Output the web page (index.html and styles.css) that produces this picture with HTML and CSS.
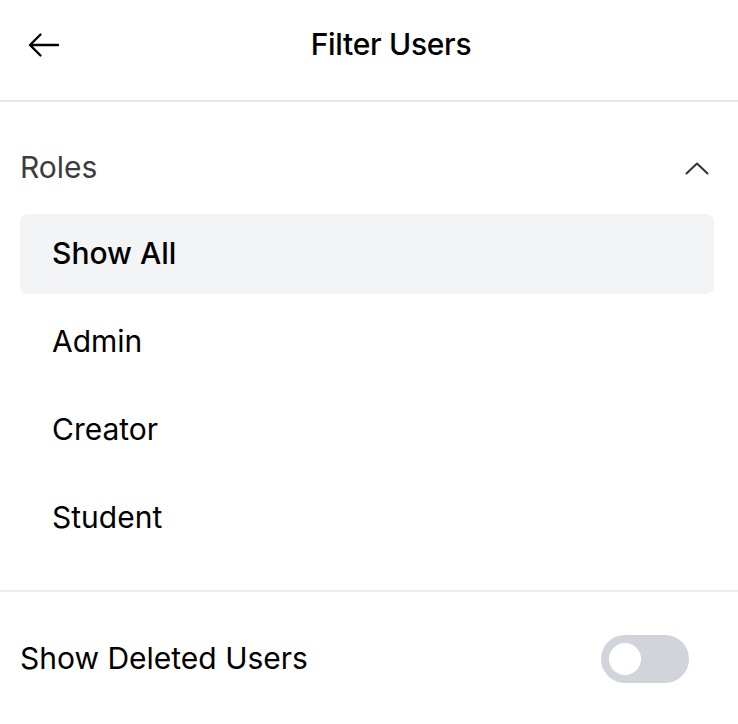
FILE: index.html
```html
<!DOCTYPE html>
<html>
<head>
<meta charset="utf-8">
<link rel="stylesheet" href="styles.css">
</head>
<body>
<div class="panel">
  <header class="header">
    <button class="back" aria-label="Back">
      <svg width="32" height="26" viewBox="0 0 32 26" fill="none" stroke="#000" stroke-width="2.4" stroke-linecap="round" stroke-linejoin="round">
        <path d="M30 13H2.5M12.5 2.5L2 13l10.5 10.5"/>
      </svg>
    </button>
    <h1 class="title">Filter Users</h1>
  </header>
  <section class="roles">
    <div class="roles-head">
      <span class="roles-label">Roles</span>
      <svg class="chev" width="24" height="13" viewBox="0 0 24 13" fill="none" stroke="#333" stroke-width="2" stroke-linecap="round" stroke-linejoin="round">
        <path d="M1.5 11.5L12 1.5l10.5 10"/>
      </svg>
    </div>
    <ul class="list">
      <li class="item active">Show All</li>
      <li class="item">Admin</li>
      <li class="item">Creator</li>
      <li class="item">Student</li>
    </ul>
  </section>
  <div class="toggle-row">
    <span class="toggle-label">Show Deleted Users</span>
    <span class="toggle"><span class="knob"></span></span>
  </div>
</div>
</body>
</html>
```
FILE: styles.css
```css
* { box-sizing: border-box; }
html, body { margin: 0; padding: 0; background: #fff; }
body { font-family: Inter, "Noto Sans", sans-serif; color: #000; }
.panel { width: 738px; }
.header {
  height: 102px;
  display: flex;
  align-items: center;
  padding: 0 20px 10px;
  border-bottom: 2px solid #e6e6ea;
}
.back {
  width: 44px; height: 44px; padding: 0 0 0 8px; margin: 0;
  border: 0; background: none;
  display: flex; align-items: center;
}
.title {
  flex: 1; margin: 0 0 3px; text-align: center;
  font-size: 30px; font-weight: 500; line-height: 36px;
  letter-spacing: -0.3px;
}
.roles { padding: 0 24px 32px 20px; border-bottom: 2px solid #ecebf0; }
.roles-head {
  display: flex; justify-content: space-between; align-items: center;
  padding: 44px 5px 26px 0; height: 112px;
}
.chev { margin-top: 3px; }
.roles-label { font-size: 30px; line-height: 42px; color: #3c3c40; }
.list { list-style: none; margin: 0; padding: 0; display: flex; flex-direction: column; gap: 8px; }
.item {
  height: 80px; display: flex; align-items: center;
  padding: 0 0 3px 32px; font-size: 30px; border-radius: 8px;
}
.item.active { background: #f3f4f6; font-weight: 500; }
.toggle-row {
  display: flex; justify-content: space-between; align-items: center;
  padding: 43px 49px 41px 20px;
}
.toggle-label { font-size: 30px; margin-bottom: 3px; }
.toggle {
  width: 88px; height: 48px; border-radius: 24px; background: #d1d5db;
  display: flex; align-items: center; padding-left: 8px;
}
.knob { width: 32px; height: 32px; border-radius: 50%; background: #fff; }
```
